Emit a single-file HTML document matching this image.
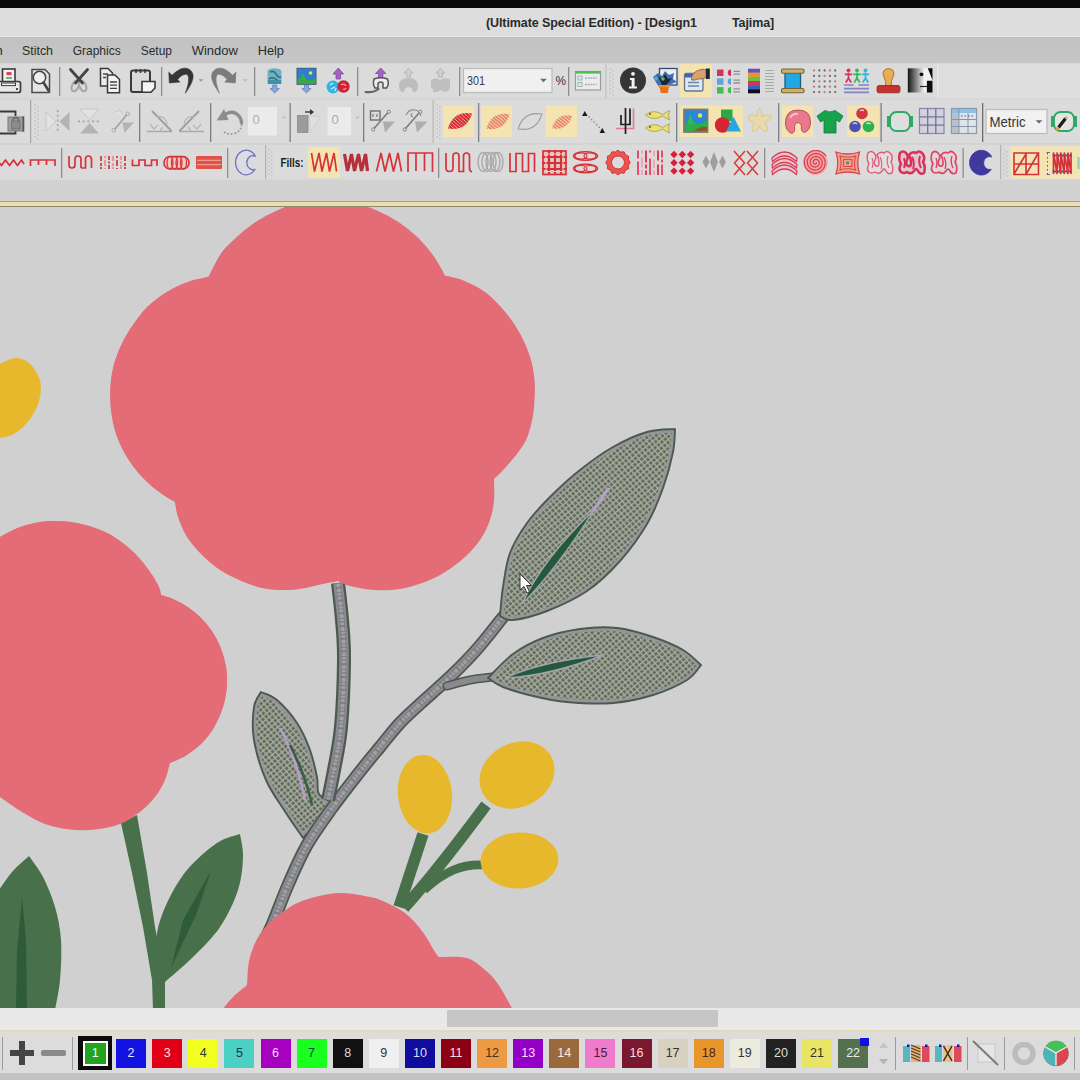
<!DOCTYPE html><html><head><meta charset="utf-8"><title>Design1</title><style>
html,body{margin:0;padding:0;}
body{width:1080px;height:1080px;overflow:hidden;background:#d1d1d1;position:relative;font-family:"Liberation Sans",sans-serif;color:#222;}
.a{position:absolute;}
#blk{left:0;top:0;width:1080px;height:8px;background:#0a0a0a;}
#title{left:0;top:8px;width:1080px;height:28px;background:#dddddd;}
#title span{position:absolute;top:7.5px;font-size:12.5px;font-weight:bold;color:#2a2a2a;white-space:nowrap;letter-spacing:-0.1px}
#menu{left:0;top:36px;width:1080px;height:27px;background:linear-gradient(#c1c1c1,#c7c7c7);border-top:1px solid #e6e6e6;box-sizing:border-box}
#menu span{position:absolute;top:6px;font-size:13px;color:#2b2b2b;white-space:nowrap}
.tb{background:#dadada;border-right:1px solid #bdbdbd;box-sizing:border-box}
.sep{width:1px;background:#8c8c8c;}
.hl{background:#f3e4b3;}
.grip{width:5px;background:repeating-linear-gradient(180deg,#c4c4c4 0 1px,#e6e6e6 1px 3px);opacity:.9}
#rows{left:0;top:63px;width:1080px;height:117px;background:#d4d4d4;}
#band{left:0;top:180px;width:1080px;height:21px;background:#d2d2d2;}
#yline{left:0;top:200.7px;width:1080px;height:6.3px;background:#e8dfb0;border-top:1px solid #a8a283;border-bottom:1.4px solid #8f8a6e;box-sizing:border-box}
#canvas{left:0;top:207px;width:1080px;height:801px;background:#d0d0d0;overflow:hidden}
#scroll{left:0;top:1008px;width:1080px;height:22px;background:#e8e8e8;}
#thumb{left:447px;top:1010px;width:271px;height:17px;background:#c6c6c6;}
#yline2{left:0;top:1029.5px;width:1080px;height:2.5px;background:#e2dab2;}
#pal{left:0;top:1032px;width:1080px;height:41px;background:#dcdcdc;}
#bot{left:0;top:1073px;width:1080px;height:7px;background:#c2c2c2;}
.sw{position:absolute;top:1039px;width:30px;height:29px;font-size:12.5px;line-height:29px;text-align:center;}
.cb{background:#f1f1f1;border:1px solid #bcbcbc;box-sizing:border-box;font-size:14px;color:#333}
svg{position:absolute;overflow:visible}
</style></head><body>
<div id="blk" class="a"></div>
<div id="title" class="a"><span style="left:486px">(Ultimate Special Edition) - [Design1</span><span style="left:732px">Tajima]</span></div>
<div id="menu" class="a"><svg style="left:0;top:0" width="1080" height="27" font-size="13" fill="#2b2b2b"><text x="-4.500" y="17.600">n</text><text x="22" y="17.600" textLength="31" lengthAdjust="spacingAndGlyphs">Stitch</text><text x="72.700" y="17.600" textLength="48" lengthAdjust="spacingAndGlyphs">Graphics</text><text x="140.700" y="17.600" textLength="31.300" lengthAdjust="spacingAndGlyphs">Setup</text><text x="191.700" y="17.600" textLength="46.300" lengthAdjust="spacingAndGlyphs">Window</text><text x="257.700" y="17.600" textLength="26.300" lengthAdjust="spacingAndGlyphs">Help</text></svg></div>
<div id="rows" class="a"></div>
<div id="band" class="a"></div>
<div id="yline" class="a"></div>
<div id="canvas" class="a"><svg id="art" style="left:0;top:0" width="1080" height="801" viewBox="0 207 1080 801">
<defs><pattern id="hx" width="4.4" height="4.4" patternUnits="userSpaceOnUse" patternTransform="rotate(-40)">
<rect width="4.4" height="4.4" fill="#626c5d"/><path d="M0,0.7H4.4M0.7,0V4.4" stroke="#a9ad9f" stroke-width="1.35"/></pattern></defs>
<clipPath id="cl3"><path d="M261.0,692.0 C259.8,694.5 255.2,699.0 254.0,707.0 C252.8,715.0 252.0,727.8 254.0,740.0 C256.0,752.2 260.7,767.8 266.0,780.0 C271.3,792.2 279.8,803.3 286.0,813.0 C292.2,822.7 300.2,833.8 303.0,838.0 C305.5,835.3 313.2,828.0 318.0,822.0 C322.8,816.0 329.7,805.3 332.0,802.0 C329.8,800.7 321.5,798.2 319.0,794.0 C316.5,789.8 318.5,784.3 317.0,777.0 C315.5,769.7 313.3,759.0 310.0,750.0 C306.7,741.0 302.5,731.3 297.0,723.0 C291.5,714.7 283.0,705.2 277.0,700.0 C271.0,694.8 263.7,693.3 261.0,692.0 Z"/></clipPath><path d="M261.0,692.0 C259.8,694.5 255.2,699.0 254.0,707.0 C252.8,715.0 252.0,727.8 254.0,740.0 C256.0,752.2 260.7,767.8 266.0,780.0 C271.3,792.2 279.8,803.3 286.0,813.0 C292.2,822.7 300.2,833.8 303.0,838.0 C305.5,835.3 313.2,828.0 318.0,822.0 C322.8,816.0 329.7,805.3 332.0,802.0 C329.8,800.7 321.5,798.2 319.0,794.0 C316.5,789.8 318.5,784.3 317.0,777.0 C315.5,769.7 313.3,759.0 310.0,750.0 C306.7,741.0 302.5,731.3 297.0,723.0 C291.5,714.7 283.0,705.2 277.0,700.0 C271.0,694.8 263.7,693.3 261.0,692.0 Z" fill="url(#hx)" stroke="#96959c" stroke-width="7" stroke-linejoin="round" clip-path="url(#cl3)"/>
<path d="M261.0,692.0 C259.8,694.5 255.2,699.0 254.0,707.0 C252.8,715.0 252.0,727.8 254.0,740.0 C256.0,752.2 260.7,767.8 266.0,780.0 C271.3,792.2 279.8,803.3 286.0,813.0 C292.2,822.7 300.2,833.8 303.0,838.0 C305.5,835.3 313.2,828.0 318.0,822.0 C322.8,816.0 329.7,805.3 332.0,802.0 C329.8,800.7 321.5,798.2 319.0,794.0 C316.5,789.8 318.5,784.3 317.0,777.0 C315.5,769.7 313.3,759.0 310.0,750.0 C306.7,741.0 302.5,731.3 297.0,723.0 C291.5,714.7 283.0,705.2 277.0,700.0 C271.0,694.8 263.7,693.3 261.0,692.0 Z" fill="none" stroke="#4a5a4c" stroke-width="1.9" stroke-linejoin="round"/>
<path d="M280,728 C292,750 300,775 305,800" fill="none" stroke="#b5a0c8" stroke-width="2.5"/>
<path d="M290,745 C300,765 308,785 312,805" fill="none" stroke="#3a5c44" stroke-width="2.5"/>
<path d="M503.0,617.0 C498.8,622.2 486.5,638.3 478.0,648.0 C469.5,657.7 461.7,665.7 452.0,675.0 C442.3,684.3 428.7,696.0 420.0,704.0 C411.3,712.0 406.7,715.8 400.0,723.0 C393.3,730.2 387.0,738.5 380.0,747.0 C373.0,755.5 366.0,763.8 358.0,774.0 C350.0,784.2 340.5,796.2 332.0,808.0 C323.5,819.8 314.3,832.2 307.0,845.0 C299.7,857.8 293.8,871.7 288.0,885.0 C282.2,898.3 276.3,915.0 272.0,925.0 C267.7,935.0 263.7,941.7 262.0,945.0" fill="none" stroke="#4a5a4c" stroke-width="13" stroke-linecap="round"/>
<path d="M503.0,617.0 C498.8,622.2 486.5,638.3 478.0,648.0 C469.5,657.7 461.7,665.7 452.0,675.0 C442.3,684.3 428.7,696.0 420.0,704.0 C411.3,712.0 406.7,715.8 400.0,723.0 C393.3,730.2 387.0,738.5 380.0,747.0 C373.0,755.5 366.0,763.8 358.0,774.0 C350.0,784.2 340.5,796.2 332.0,808.0 C323.5,819.8 314.3,832.2 307.0,845.0 C299.7,857.8 293.8,871.7 288.0,885.0 C282.2,898.3 276.3,915.0 272.0,925.0 C267.7,935.0 263.7,941.7 262.0,945.0" fill="none" stroke="#8b8890" stroke-width="9.5" stroke-linecap="round"/>
<path d="M503.0,617.0 C498.8,622.2 486.5,638.3 478.0,648.0 C469.5,657.7 461.7,665.7 452.0,675.0 C442.3,684.3 428.7,696.0 420.0,704.0 C411.3,712.0 406.7,715.8 400.0,723.0 C393.3,730.2 387.0,738.5 380.0,747.0 C373.0,755.5 366.0,763.8 358.0,774.0 C350.0,784.2 340.5,796.2 332.0,808.0 C323.5,819.8 314.3,832.2 307.0,845.0 C299.7,857.8 293.8,871.7 288.0,885.0 C282.2,898.3 276.3,915.0 272.0,925.0 C267.7,935.0 263.7,941.7 262.0,945.0" fill="none" stroke="#a3a1a8" stroke-width="3.3"/>
<path d="M503.0,617.0 C498.8,622.2 486.5,638.3 478.0,648.0 C469.5,657.7 461.7,665.7 452.0,675.0 C442.3,684.3 428.7,696.0 420.0,704.0 C411.3,712.0 406.7,715.8 400.0,723.0 C393.3,730.2 387.0,738.5 380.0,747.0 C373.0,755.5 366.0,763.8 358.0,774.0 C350.0,784.2 340.5,796.2 332.0,808.0 C323.5,819.8 314.3,832.2 307.0,845.0 C299.7,857.8 293.8,871.7 288.0,885.0 C282.2,898.3 276.3,915.0 272.0,925.0 C267.7,935.0 263.7,941.7 262.0,945.0" fill="none" stroke="#5e6062" stroke-width="5.2" stroke-dasharray="1.200 2.600 2 3.800 1 2.200" opacity=".5"/>
<path d="M447.0,686.0 C450.8,685.0 462.5,681.5 470.0,680.0 C477.5,678.5 488.3,677.5 492.0,677.0" fill="none" stroke="#4a5a4c" stroke-width="9" stroke-linecap="round"/>
<path d="M447.0,686.0 C450.8,685.0 462.5,681.5 470.0,680.0 C477.5,678.5 488.3,677.5 492.0,677.0" fill="none" stroke="#8b8890" stroke-width="6" stroke-linecap="round"/>
<path d="M338.0,583.0 C338.7,589.2 341.0,607.2 342.0,620.0 C343.0,632.8 344.2,642.2 344.0,660.0 C343.8,677.8 342.7,708.7 341.0,727.0 C339.3,745.3 336.2,757.8 334.0,770.0 C331.8,782.2 329.0,795.0 328.0,800.0" fill="none" stroke="#4a5a4c" stroke-width="14" stroke-linecap="butt"/>
<path d="M338.0,583.0 C338.7,589.2 341.0,607.2 342.0,620.0 C343.0,632.8 344.2,642.2 344.0,660.0 C343.8,677.8 342.7,708.7 341.0,727.0 C339.3,745.3 336.2,757.8 334.0,770.0 C331.8,782.2 329.0,795.0 328.0,800.0" fill="none" stroke="#8b8890" stroke-width="9.5" stroke-linecap="butt"/>
<path d="M338.0,583.0 C338.7,589.2 341.0,607.2 342.0,620.0 C343.0,632.8 344.2,642.2 344.0,660.0 C343.8,677.8 342.7,708.7 341.0,727.0 C339.3,745.3 336.2,757.8 334.0,770.0 C331.8,782.2 329.0,795.0 328.0,800.0" fill="none" stroke="#a3a1a8" stroke-width="3.3"/>
<path d="M338.0,583.0 C338.7,589.2 341.0,607.2 342.0,620.0 C343.0,632.8 344.2,642.2 344.0,660.0 C343.8,677.8 342.7,708.7 341.0,727.0 C339.3,745.3 336.2,757.8 334.0,770.0 C331.8,782.2 329.0,795.0 328.0,800.0" fill="none" stroke="#5e6062" stroke-width="5.2" stroke-dasharray="1.200 2.600 2 3.800 1 2.200" opacity=".5"/>
<clipPath id="cl1"><path d="M675.0,429.0 C670.3,429.5 657.3,429.0 647.0,432.0 C636.7,435.0 624.2,440.7 613.0,447.0 C601.8,453.3 590.5,461.7 580.0,470.0 C569.5,478.3 558.8,488.2 550.0,497.0 C541.2,505.8 533.7,513.7 527.0,523.0 C520.3,532.3 514.0,542.3 510.0,553.0 C506.0,563.7 504.7,576.5 503.0,587.0 C501.3,597.5 500.5,611.2 500.0,616.0 C502.2,616.7 505.2,620.8 513.0,620.0 C520.8,619.2 534.7,615.8 547.0,611.0 C559.3,606.2 574.8,599.3 587.0,591.0 C599.2,582.7 610.0,572.2 620.0,561.0 C630.0,549.8 639.8,536.2 647.0,524.0 C654.2,511.8 658.7,500.0 663.0,488.0 C667.3,476.0 671.0,461.8 673.0,452.0 C675.0,442.2 674.7,432.8 675.0,429.0 Z"/></clipPath><path d="M675.0,429.0 C670.3,429.5 657.3,429.0 647.0,432.0 C636.7,435.0 624.2,440.7 613.0,447.0 C601.8,453.3 590.5,461.7 580.0,470.0 C569.5,478.3 558.8,488.2 550.0,497.0 C541.2,505.8 533.7,513.7 527.0,523.0 C520.3,532.3 514.0,542.3 510.0,553.0 C506.0,563.7 504.7,576.5 503.0,587.0 C501.3,597.5 500.5,611.2 500.0,616.0 C502.2,616.7 505.2,620.8 513.0,620.0 C520.8,619.2 534.7,615.8 547.0,611.0 C559.3,606.2 574.8,599.3 587.0,591.0 C599.2,582.7 610.0,572.2 620.0,561.0 C630.0,549.8 639.8,536.2 647.0,524.0 C654.2,511.8 658.7,500.0 663.0,488.0 C667.3,476.0 671.0,461.8 673.0,452.0 C675.0,442.2 674.7,432.8 675.0,429.0 Z" fill="url(#hx)" stroke="#96959c" stroke-width="7" stroke-linejoin="round" clip-path="url(#cl1)"/>
<path d="M675.0,429.0 C670.3,429.5 657.3,429.0 647.0,432.0 C636.7,435.0 624.2,440.7 613.0,447.0 C601.8,453.3 590.5,461.7 580.0,470.0 C569.5,478.3 558.8,488.2 550.0,497.0 C541.2,505.8 533.7,513.7 527.0,523.0 C520.3,532.3 514.0,542.3 510.0,553.0 C506.0,563.7 504.7,576.5 503.0,587.0 C501.3,597.5 500.5,611.2 500.0,616.0 C502.2,616.7 505.2,620.8 513.0,620.0 C520.8,619.2 534.7,615.8 547.0,611.0 C559.3,606.2 574.8,599.3 587.0,591.0 C599.2,582.7 610.0,572.2 620.0,561.0 C630.0,549.8 639.8,536.2 647.0,524.0 C654.2,511.8 658.7,500.0 663.0,488.0 C667.3,476.0 671.0,461.8 673.0,452.0 C675.0,442.2 674.7,432.8 675.0,429.0 Z" fill="none" stroke="#4a5a4c" stroke-width="1.9" stroke-linejoin="round"/>
<clipPath id="cl2"><path d="M488.0,678.0 C492.2,674.0 503.8,660.7 513.0,654.0 C522.2,647.3 531.8,642.2 543.0,638.0 C554.2,633.8 567.7,630.7 580.0,629.0 C592.3,627.3 604.8,626.7 617.0,628.0 C629.2,629.3 642.0,633.3 653.0,637.0 C664.0,640.7 675.0,645.3 683.0,650.0 C691.0,654.7 698.0,662.5 701.0,665.0 C698.7,667.5 695.0,675.0 687.0,680.0 C679.0,685.0 665.3,691.2 653.0,695.0 C640.7,698.8 627.3,701.8 613.0,703.0 C598.7,704.2 580.3,703.2 567.0,702.0 C553.7,700.8 543.7,698.5 533.0,696.0 C522.3,693.5 510.5,690.0 503.0,687.0 C495.5,684.0 490.5,679.5 488.0,678.0 Z"/></clipPath><path d="M488.0,678.0 C492.2,674.0 503.8,660.7 513.0,654.0 C522.2,647.3 531.8,642.2 543.0,638.0 C554.2,633.8 567.7,630.7 580.0,629.0 C592.3,627.3 604.8,626.7 617.0,628.0 C629.2,629.3 642.0,633.3 653.0,637.0 C664.0,640.7 675.0,645.3 683.0,650.0 C691.0,654.7 698.0,662.5 701.0,665.0 C698.7,667.5 695.0,675.0 687.0,680.0 C679.0,685.0 665.3,691.2 653.0,695.0 C640.7,698.8 627.3,701.8 613.0,703.0 C598.7,704.2 580.3,703.2 567.0,702.0 C553.7,700.8 543.7,698.5 533.0,696.0 C522.3,693.5 510.5,690.0 503.0,687.0 C495.5,684.0 490.5,679.5 488.0,678.0 Z" fill="url(#hx)" stroke="#96959c" stroke-width="7" stroke-linejoin="round" clip-path="url(#cl2)"/>
<path d="M488.0,678.0 C492.2,674.0 503.8,660.7 513.0,654.0 C522.2,647.3 531.8,642.2 543.0,638.0 C554.2,633.8 567.7,630.7 580.0,629.0 C592.3,627.3 604.8,626.7 617.0,628.0 C629.2,629.3 642.0,633.3 653.0,637.0 C664.0,640.7 675.0,645.3 683.0,650.0 C691.0,654.7 698.0,662.5 701.0,665.0 C698.7,667.5 695.0,675.0 687.0,680.0 C679.0,685.0 665.3,691.2 653.0,695.0 C640.7,698.8 627.3,701.8 613.0,703.0 C598.7,704.2 580.3,703.2 567.0,702.0 C553.7,700.8 543.7,698.5 533.0,696.0 C522.3,693.5 510.5,690.0 503.0,687.0 C495.5,684.0 490.5,679.5 488.0,678.0 Z" fill="none" stroke="#4a5a4c" stroke-width="1.9" stroke-linejoin="round"/>
<path d="M522,604 Q543,558.500 594,510 Q557,568.500 522,604 Z" fill="#245a3c" stroke="#a5a3ae" stroke-width="1.4"/>
<path d="M594,510 L608,489" stroke="#b5a0c8" stroke-width="3.2" stroke-linecap="round"/>
<path d="M505,678 Q542.5,661 604,655 Q546.500,676.500 505,678 Z" fill="#245a3c" stroke="#a5a3ae" stroke-width="1.4"/>
<path d="M423,834 L399,907" fill="none" stroke="#48704a" stroke-width="11.500" stroke-linecap="butt"/>
<path d="M486,805 C466,832 436,872 404,908" fill="none" stroke="#48704a" stroke-width="11.500" stroke-linecap="butt"/>
<path d="M483,865 C462,864 445,871 424,890" fill="none" stroke="#48704a" stroke-width="8.600" stroke-linecap="butt"/>
<ellipse cx="425" cy="794.200" rx="27" ry="39.500" transform="rotate(-6 425 795)" fill="#e8b82c"/>
<ellipse cx="517" cy="775" rx="39" ry="32" transform="rotate(-28 517 775)" fill="#e8b82c"/>
<ellipse cx="519.500" cy="860.400" rx="39" ry="28" transform="rotate(-3 520 860)" fill="#e8b82c"/>
<path d="M-3.0,362.0 C-2.5,362.3 -1.7,364.2 0.0,364.0 C1.7,363.8 4.2,361.5 7.0,360.5 C9.8,359.5 13.5,357.8 17.0,358.0 C20.5,358.2 24.9,359.8 28.0,362.0 C31.1,364.2 33.4,367.5 35.5,371.0 C37.6,374.5 39.8,378.7 40.5,383.0 C41.2,387.3 41.0,392.2 40.0,397.0 C39.0,401.8 37.1,407.2 34.5,412.0 C31.9,416.8 28.1,421.8 24.5,425.5 C20.9,429.2 17.1,432.4 13.0,434.5 C8.9,436.6 2.7,437.4 0.0,438.0 C-2.7,438.6 -2.5,438.0 -3.0,438.0 C-3.0,425.3 -3.0,374.7 -3.0,362.0 Z" fill="#e8b82c"/>
<path d="M121,823 L137,815 L147,873 L155,927 L165,980 L165,1010 L153,1010 L152,980 L143,927 L132,873 Z" fill="#48704a"/>
<path d="M-3.0,893.0 C-0.5,889.5 6.7,878.2 12.0,872.0 C17.3,865.8 26.2,858.7 29.0,856.0 C31.3,859.5 38.7,868.5 43.0,877.0 C47.3,885.5 52.0,896.5 55.0,907.0 C58.0,917.5 60.2,927.8 61.0,940.0 C61.8,952.2 61.0,968.3 60.0,980.0 C59.0,991.7 55.8,1005.0 55.0,1010.0 C45.3,1010.0 6.7,1010.0 -3.0,1010.0 C-3.0,990.5 -3.0,912.5 -3.0,893.0 Z" fill="#48704a"/>
<path d="M240.0,834.0 C236.2,835.5 225.8,837.0 217.0,843.0 C208.2,849.0 195.3,860.0 187.0,870.0 C178.7,880.0 172.0,892.5 167.0,903.0 C162.0,913.5 158.5,923.5 157.0,933.0 C155.5,942.5 156.7,951.8 158.0,960.0 C159.3,968.2 163.8,978.3 165.0,982.0 C169.7,977.8 183.8,966.2 193.0,957.0 C202.2,947.8 212.5,938.2 220.0,927.0 C227.5,915.8 234.2,901.7 238.0,890.0 C241.8,878.3 242.7,866.3 243.0,857.0 C243.3,847.7 240.5,837.8 240.0,834.0 Z" fill="#48704a"/>
<path d="M22,898 L26,940 L27,1010 L16,1010 L17,950 Z" fill="#2f5c38"/>
<path d="M211,871 L196,915 L171,968 L183,920 Z" fill="#2f5c38"/>
<path d="M285.0,207.0 C298.3,207.0 351.7,207.0 365.0,207.0 C369.2,209.2 382.2,215.3 390.0,220.0 C397.8,224.7 405.3,229.7 412.0,235.0 C418.7,240.3 425.3,246.7 430.0,252.0 C434.7,257.3 437.5,263.0 440.0,267.0 C442.5,271.0 444.2,274.5 445.0,276.0 C447.8,276.7 455.3,277.3 462.0,280.0 C468.7,282.7 477.8,286.7 485.0,292.0 C492.2,297.3 499.2,304.8 505.0,312.0 C510.8,319.2 515.8,327.5 520.0,335.0 C524.2,342.5 527.6,349.5 530.0,357.0 C532.4,364.5 533.8,371.7 534.5,380.0 C535.2,388.3 534.6,399.5 534.0,407.0 C533.4,414.5 532.5,419.2 531.0,425.0 C529.5,430.8 528.2,436.2 525.0,442.0 C521.8,447.8 516.2,455.0 512.0,460.0 C507.8,465.0 503.0,469.0 500.0,472.0 C497.0,475.0 495.0,477.0 494.0,478.0 C494.0,481.7 494.7,493.0 494.0,500.0 C493.3,507.0 492.3,513.3 490.0,520.0 C487.7,526.7 484.2,533.8 480.0,540.0 C475.8,546.2 470.8,551.7 465.0,557.0 C459.2,562.3 451.7,567.8 445.0,572.0 C438.3,576.2 432.5,579.2 425.0,582.0 C417.5,584.8 408.3,587.7 400.0,589.0 C391.7,590.3 383.3,590.5 375.0,590.0 C366.7,589.5 356.2,587.5 350.0,586.0 C343.8,584.5 340.0,581.8 338.0,581.0 C333.7,581.8 320.5,584.5 312.0,586.0 C303.5,587.5 295.3,589.7 287.0,590.0 C278.7,590.3 269.8,589.7 262.0,588.0 C254.2,586.3 247.0,583.0 240.0,580.0 C233.0,577.0 226.3,574.2 220.0,570.0 C213.7,565.8 207.5,560.5 202.0,555.0 C196.5,549.5 191.0,543.3 187.0,537.0 C183.0,530.7 180.0,522.8 178.0,517.0 C176.0,511.2 175.5,504.5 175.0,502.0 C173.3,501.0 169.7,499.3 165.0,496.0 C160.3,492.7 152.8,487.7 147.0,482.0 C141.2,476.3 135.0,469.5 130.0,462.0 C125.0,454.5 120.2,445.7 117.0,437.0 C113.8,428.3 112.0,419.5 111.0,410.0 C110.0,400.5 110.0,389.2 111.0,380.0 C112.0,370.8 113.8,363.3 117.0,355.0 C120.2,346.7 125.0,338.0 130.0,330.0 C135.0,322.0 140.3,313.7 147.0,307.0 C153.7,300.3 162.5,294.4 170.0,290.0 C177.5,285.6 185.7,282.5 192.0,280.5 C198.3,278.5 205.3,278.4 208.0,278.0 C210.3,273.7 216.7,259.2 222.0,252.0 C227.3,244.8 233.7,240.3 240.0,235.0 C246.3,229.7 252.5,224.7 260.0,220.0 C267.5,215.3 280.8,209.2 285.0,207.0 Z" fill="#e46c77"/>
<path d="M-5.0,540.0 C-4.2,539.5 -4.2,539.2 0.0,537.0 C4.2,534.8 13.3,529.5 20.0,527.0 C26.7,524.5 33.8,523.0 40.0,522.0 C46.2,521.0 50.3,520.7 57.0,521.0 C63.7,521.3 72.8,522.5 80.0,524.0 C87.2,525.5 94.2,527.8 100.0,530.0 C105.8,532.2 109.7,533.8 115.0,537.5 C120.3,541.2 126.2,546.2 132.0,552.0 C137.8,557.8 145.5,566.2 150.0,572.0 C154.5,577.8 157.2,583.2 159.0,587.0 C160.8,590.8 160.7,593.7 161.0,595.0 C163.3,595.8 169.3,597.1 175.0,600.0 C180.7,602.9 188.8,607.2 195.0,612.5 C201.2,617.8 207.5,625.4 212.0,632.0 C216.5,638.6 219.5,644.8 222.0,652.0 C224.5,659.2 226.5,667.0 227.0,675.0 C227.5,683.0 226.7,692.2 225.0,700.0 C223.3,707.8 220.3,715.3 217.0,722.0 C213.7,728.7 210.0,734.5 205.0,740.0 C200.0,745.5 192.8,751.2 187.0,755.0 C181.2,758.8 172.8,761.7 170.0,763.0 C169.2,765.8 167.5,774.3 165.0,780.0 C162.5,785.7 159.2,791.7 155.0,797.0 C150.8,802.3 145.8,807.5 140.0,812.0 C134.2,816.5 127.5,821.1 120.0,824.0 C112.5,826.9 103.3,828.6 95.0,829.5 C86.7,830.4 78.3,830.4 70.0,829.5 C61.7,828.6 53.0,826.9 45.0,824.0 C37.0,821.1 29.5,816.5 22.0,812.0 C14.5,807.5 4.5,800.2 0.0,797.0 C-4.5,793.8 -4.2,793.7 -5.0,793.0 C-5.0,750.8 -5.0,582.2 -5.0,540.0 Z" fill="#e46c77"/>
<path d="M222.0,1010.0 C223.8,1007.8 228.8,1001.2 233.0,997.0 C237.2,992.8 244.7,987.0 247.0,985.0 C247.5,980.3 247.3,966.2 250.0,957.0 C252.7,947.8 256.3,938.3 263.0,930.0 C269.7,921.7 281.3,912.5 290.0,907.0 C298.7,901.5 306.5,899.3 315.0,897.0 C323.5,894.7 331.8,893.0 341.0,893.0 C350.2,893.0 362.7,895.5 370.0,897.0 C377.3,898.5 379.2,899.3 385.0,902.0 C390.8,904.7 398.8,908.2 405.0,913.0 C411.2,917.8 417.0,924.5 422.0,931.0 C427.0,937.5 432.2,947.7 435.0,952.0 C437.8,956.3 438.3,956.2 439.0,957.0 C443.7,957.2 459.3,955.8 467.0,958.0 C474.7,960.2 479.8,965.7 485.0,970.0 C490.2,974.3 493.3,977.3 498.0,984.0 C502.7,990.7 510.5,1005.7 513.0,1010.0 C464.5,1010.0 270.5,1010.0 222.0,1010.0 Z" fill="#e46c77"/>
<circle cx="327.0" cy="330.5" r="130.0" fill="#e46c77"/>
<circle cx="230.4" cy="395.0" r="120.2" fill="#e46c77"/>
<circle cx="416.5" cy="390.0" r="118.0" fill="#e46c77"/>
<circle cx="285.0" cy="477.0" r="112.8" fill="#e46c77"/>
<circle cx="57.0" cy="631.6" r="110.5" fill="#e46c77"/>
<circle cx="139.3" cy="680.0" r="87.6" fill="#e46c77"/>
<path d="M520,574 L520,590 L524,586.5 L527,593 L529.5,592 L526.5,585.5 L531.5,585.5 Z" fill="#fff" stroke="#333" stroke-width="1"/>
</svg></div>
<div id="scroll" class="a"></div><div id="thumb" class="a"></div><div id="yline2" class="a"></div><div id="pal" class="a"></div><div id="bot" class="a"></div>
<svg class="a" style="left:0;top:0" width="1080" height="1080" viewBox="0 0 1080 1080" font-family="Liberation Sans, sans-serif"><rect x="0.0" y="63.7" width="605.0" height="34.0" fill="#dbdbdb"/><rect x="607.0" y="63.7" width="330.0" height="34.0" fill="#dbdbdb"/><rect x="938.3" y="63.7" width="141.7" height="34.8" fill="#dedede"/><rect x="605" y="64" width="1.300" height="34" fill="#c6c6c6"/><rect x="937" y="64" width="1.300" height="34" fill="#e8e8e8"/><rect x="2.5" y="69" width="12.5" height="14" fill="#f2f2f2" stroke="#3a3a3a" stroke-width="1.6"/><rect x="6.5" y="72" width="5" height="3.2" fill="#e0405a"/><rect x="6" y="77" width="6" height="2" fill="#6db86a"/><rect x="-4" y="81.5" width="24.5" height="11" rx="2" fill="#e9e9e9" stroke="#3a3a3a" stroke-width="1.7"/><rect x="1.5" y="83" width="14" height="2.6" fill="#f8f8f8" stroke="#3a3a3a" stroke-width="1"/><circle cx="17" cy="89" r="1.1" fill="#222"/><path d="M32,69.5 H45 L49.5,74 V92.5 H32 Z" fill="#e4e4e4" stroke="#4a4a4a" stroke-width="1.5"/><circle cx="39.5" cy="77.5" r="6.2" fill="#efefef" stroke="#444" stroke-width="1.5"/><path d="M43.5,82.5 L48.5,90.5" stroke="#444" stroke-width="2.6" stroke-linecap="round"/><rect x="59.0" y="67" width="1.3" height="29" fill="#8e8e8e"/><ellipse cx="75.300" cy="86" rx="3.200" ry="5.600" transform="rotate(24 75.300 86)" fill="none" stroke="#a8a8a8" stroke-width="2.200"/><ellipse cx="82.700" cy="86" rx="3.200" ry="5.600" transform="rotate(-24 82.700 86)" fill="none" stroke="#a8a8a8" stroke-width="2.200"/><path d="M70.500,69.500 L82.500,83 M87.500,69.500 L75.500,83" stroke="#444" stroke-width="2.800" stroke-linecap="round"/><path d="M100.5,68.5 H108 L112.5,73 V86 H100.5 Z" fill="#ececec" stroke="#3a3a3a" stroke-width="1.5"/><path d="M107.5,75 H115 L119.5,79.5 V92.7 H107.5 Z" fill="#f2f2f2" stroke="#3a3a3a" stroke-width="1.5"/><path d="M103,74h5M103,77.5h3M110,82h7M110,85.2h7M110,88.4h7" stroke="#444" stroke-width="1.3"/><rect x="131" y="70.5" width="19" height="21.5" rx="2" fill="#d9d9d9" stroke="#3a3a3a" stroke-width="2"/><path d="M136,69 v4 M140.5,69 v4 M145,69 v4" stroke="#3a3a3a" stroke-width="1.6"/><path d="M142,81.5 H155 V88 L151,92.3 H142 Z" fill="#f4f4f4" stroke="#3a3a3a" stroke-width="1.6"/><rect x="161.0" y="67" width="1.3" height="29" fill="#8e8e8e"/><path d="M168.8,72.2 L169.3,83 L180,82 L177.6,79.8 C180.5,75.5 185,73.3 187.3,74.8 C189.8,77 188.8,84 185.3,93.2 C190.5,86 194.3,79 192.8,74 C191,68 184.5,67 180,69.3 C176,71.3 173.3,74.3 172,75.2 Z" fill="#363636" stroke="#363636" stroke-width=".6" stroke-linejoin="round"/><path d="M198.4,79.2 h5.2 l-2.6,2.6 z" fill="#9a9a9a"/><g transform="translate(404.7,0) scale(-1,1)"><path d="M168.8,72.2 L169.3,83 L180,82 L177.6,79.8 C180.5,75.5 185,73.3 187.3,74.8 C189.8,77 188.8,84 185.3,93.2 C190.5,86 194.3,79 192.8,74 C191,68 184.5,67 180,69.3 C176,71.3 173.3,74.3 172,75.2 Z" fill="#7b7b7b" stroke="#7b7b7b" stroke-width=".6" stroke-linejoin="round"/></g><path d="M242.4,79.2 h5.2 l-2.6,2.6 z" fill="#bdbdbd"/><rect x="254.0" y="67" width="1.3" height="29" fill="#8e8e8e"/><path d="M267.5,84 V72 Q267.5,68.3 274.5,68.3 Q281.5,68.3 281.5,72 V84 Z" fill="#6fb3bd"/><path d="M270,72 q4,-2 6,2 t5,3 M269,79 q4,-3 8,1" stroke="#2c6d8c" stroke-width="1.6" fill="none"/><path d="M268,80 h13 v4 h-13z" fill="#3f93a8"/><path d="M272.7,85 h4 v3.5 h2.6 l-4.6,4.5 l-4.6,-4.5 h2.6z" fill="#8aa8de" stroke="#5577b8" stroke-width=".7"/><rect x="297" y="68.3" width="19" height="16" fill="#2f7fcc" stroke="#3c5a78" stroke-width="1"/><path d="M297.5,84 v-5 q5,-3 9,0 t9,-1 v6z" fill="#35a845"/><path d="M300,80 l3,-7 l3,7z" fill="#2fb24c"/><circle cx="310.5" cy="73" r="1.8" fill="#f2e04a"/><path d="M304.5,85 h4 v3.5 h2.6 l-4.6,4.5 l-4.6,-4.5 h2.6z" fill="#8aa8de" stroke="#5577b8" stroke-width=".7"/><path d="M336,79 v-5 h-3 l5.3,-6 l5.3,6 h-3 v5z" fill="#a463c4" stroke="#7a3f9c" stroke-width=".7"/><circle cx="333" cy="87" r="6.4" fill="#2fb5e2"/><path d="M330,85 l3,-2 M331,89 l4,-2 M335,91 l1,-3" stroke="#c8f0ff" stroke-width="1.3"/><circle cx="343.5" cy="86.5" r="6.2" fill="#cf2232"/><path d="M341,85 q3,-2 5,1 M343,89 q2,1 3,-1" stroke="#f5a0a8" stroke-width="1.2" fill="none"/><rect x="357.0" y="67" width="1.3" height="29" fill="#8e8e8e"/><path d="M378.5,78 v-4.5 h-3 l5.2,-5.5 l5.2,5.5 h-3 v4.5z" fill="#a463c4" stroke="#7a3f9c" stroke-width=".7"/><path d="M374,79 q-1.5,5 1,9 h3 v-5 q3,-2 5,0 v5 h3.5 q3,-4 1,-9 q-7,-2.5 -13.500,0z" fill="#ececec" stroke="#555" stroke-width="1.5" stroke-linejoin="round"/><path d="M365.500,92 q8,1 13,-3" stroke="#666" stroke-width="2.2" fill="none" stroke-linecap="round"/><path d="M406.5,77 v-4 h-2.500 l4.5,-5 l4.5,5 h-2.500 v4z" fill="#d0d0d0" stroke="#b0b0b0" stroke-width=".8"/><path d="M399,86 q0,-8 9.500,-8 q9.500,0 9.500,8 q0,5 -4,6.500 q-2,-1 -2,-4 q-3.500,-3 -7,0 q0,3 -2,4 q-4,-1.500 -4,-6.500z" fill="#bdbdbd"/><path d="M438.5,77 v-4 h-2.500 l4.5,-5 l4.5,5 h-2.500 v4z" fill="#d0d0d0" stroke="#b0b0b0" stroke-width=".8"/><path d="M431,80 q5,-3 9,0 q4,-3 10,-1 v9 q-2,4 -6,4 q-2,-3 -5,-1 q-3,2 -6,1 q1,-3 -2,-4z" fill="#bfbfbf"/><rect x="459.0" y="67" width="1.3" height="29" fill="#8e8e8e"/><rect x="463.500" y="68.5" width="88.5" height="24" fill="#f0f0f0" stroke="#bdbdbd" stroke-width="1.3"/><text x="467" y="85" font-size="13" fill="#3a3a3a" textLength="18" lengthAdjust="spacingAndGlyphs">301</text><path d="M540.1,78.8 h6.8 l-3.4,3.4 z" fill="#6a6a6a"/><text x="555.5" y="85" font-size="13" fill="#333" textLength="10.5" lengthAdjust="spacingAndGlyphs">%</text><rect x="568.0" y="67" width="1.3" height="29" fill="#8e8e8e"/><rect x="575.500" y="71.5" width="25" height="18.5" fill="#ececec" stroke="#9a9a9a" stroke-width="1.2"/><rect x="575" y="71" width="26" height="2.600" fill="#55bb55"/><rect x="578" y="76" width="4" height="4" fill="#dfe8ee" stroke="#8aa" stroke-width=".8"/><rect x="578" y="82.5" width="4" height="4" fill="#dfe8ee" stroke="#8aa" stroke-width=".8"/><path d="M585,78 h12 M585,84.500 h12" stroke="#a8b0b8" stroke-width="1.6" stroke-dasharray="2 .7"/><rect x="609.5" y="68.0" width="1.5" height="1.5" fill="#c2c2c2"/><rect x="612.0" y="70.0" width="1.5" height="1.5" fill="#c2c2c2"/><rect x="609.5" y="72.0" width="1.5" height="1.5" fill="#c2c2c2"/><rect x="612.0" y="74.0" width="1.5" height="1.5" fill="#c2c2c2"/><rect x="609.5" y="76.0" width="1.5" height="1.5" fill="#c2c2c2"/><rect x="612.0" y="78.0" width="1.5" height="1.5" fill="#c2c2c2"/><rect x="609.5" y="80.0" width="1.5" height="1.5" fill="#c2c2c2"/><rect x="612.0" y="82.0" width="1.5" height="1.5" fill="#c2c2c2"/><rect x="609.5" y="84.0" width="1.5" height="1.5" fill="#c2c2c2"/><rect x="612.0" y="86.0" width="1.5" height="1.5" fill="#c2c2c2"/><rect x="609.5" y="88.0" width="1.5" height="1.5" fill="#c2c2c2"/><rect x="612.0" y="90.0" width="1.5" height="1.5" fill="#c2c2c2"/><rect x="609.5" y="92.0" width="1.5" height="1.5" fill="#c2c2c2"/><rect x="612.0" y="94.0" width="1.5" height="1.5" fill="#c2c2c2"/><circle cx="633" cy="80.500" r="13" fill="#363636"/><circle cx="633" cy="73.8" r="1.9" fill="#f4f4f4"/><path d="M630,78 h4.600 v8.600 h2.400 v2 h-8 v-2 h2.600 v-6.600 h-1.600z" fill="#f4f4f4"/><rect x="659.500" y="68.500" width="17.500" height="16.500" fill="#eceef6" stroke="#3e4868" stroke-width="1.3"/><path d="M653,77 l5,-4 l4,3 l3,-5 l4,4 l5,-2 l-1,6 l4,3 l-6,2 l-4,4 h-7 l-3,-4z" fill="#3f6fae"/><path d="M658,76 l4,3 l3,-5 l3,5 l4,-1 l-3,4 l-3,3 h-4z" fill="#1f2438"/><circle cx="663" cy="79" r="1.8" fill="#6fb06a"/><circle cx="656" cy="78.500" r="2" fill="#58a8c8"/><path d="M659.500,86 h9.500 l-1.200,7 h-7.100z" fill="#e2701e"/><rect x="658.500" y="85" width="11.500" height="2.200" fill="#f08a30"/><rect x="680.0" y="64.0" width="32.0" height="33.5" fill="#f3e4b2"/><rect x="684.500" y="73.500" width="18.500" height="17.500" rx="2" fill="#dbe7f3" stroke="#6a7486" stroke-width="1.3"/><rect x="685" y="74" width="17.500" height="3.500" fill="#3a66c4"/><path d="M688,82.500 h11 M688,86 h11" stroke="#6f86a8" stroke-width="1.500"/><path d="M691.500,77.500 q1,-5 6,-7 q5,-2 8.500,-1 v8 q-4,2 -8,1.500 q-3,1.500 -6.500,1 z" fill="#d9a070" stroke="#8a5a38" stroke-width=".8"/><rect x="706" y="68.500" width="3.800" height="10.500" fill="#20263a"/><rect x="717" y="69.5" width="6.500" height="6.500" fill="#d23458"/><path d="M731,69.5 a3.200,3.200 0 0 0 0,6.500z" fill="#d23458"/><path d="M733.500,71.3 h6.500 M733.500,74.2 h6.500" stroke="#8f8f9a" stroke-width="1.300"/><rect x="717" y="78.3" width="6.500" height="6.500" fill="#62a2dc"/><path d="M731,78.3 a3.200,3.200 0 0 0 0,6.500z" fill="#62a2dc"/><path d="M733.500,80.1 h6.500 M733.500,83.0 h6.500" stroke="#8f8f9a" stroke-width="1.300"/><rect x="717" y="87.1" width="6.500" height="6.500" fill="#3fc243"/><path d="M731,87.1 a3.200,3.200 0 0 0 0,6.500z" fill="#3fc243"/><path d="M733.500,88.9 h6.500 M733.500,91.8 h6.500" stroke="#8f8f9a" stroke-width="1.300"/><rect x="748" y="68.7" width="12" height="4.100" fill="#6c4fb0"/><rect x="748" y="72.8" width="12" height="4.100" fill="#f0912e"/><rect x="748" y="76.9" width="12" height="4.100" fill="#62c63c"/><rect x="748" y="81.0" width="12" height="4.100" fill="#d23458"/><rect x="748" y="85.1" width="12" height="4.100" fill="#2f62c4"/><rect x="748" y="89.2" width="12" height="4.100" fill="#101014"/><path d="M765,70.500h9 M765,73.500h9 M765,76.500h9 M765,79.500h9 M765,82.500h9 M765,85.500h9 M765,88.500h9 M765,91.500h9" stroke="#a9a9a9" stroke-width="1.200"/><rect x="785" y="72.500" width="15.500" height="16.500" fill="#1fa8e2" stroke="#1b5f7c" stroke-width="1.300"/><rect x="781.5" y="69" width="22.500" height="4.200" rx="1.500" fill="#cdb06a" stroke="#7b6230" stroke-width="1.100"/><rect x="781.5" y="88.500" width="22.500" height="4.200" rx="1.500" fill="#cdb06a" stroke="#7b6230" stroke-width="1.100"/><circle cx="814.0" cy="70.5" r="1.150" fill="#c07a7a"/><circle cx="814.0" cy="75.9" r="1.150" fill="#6f6f6f"/><circle cx="814.0" cy="81.3" r="1.150" fill="#6f6f6f"/><circle cx="814.0" cy="86.7" r="1.150" fill="#c07a7a"/><circle cx="814.0" cy="92.1" r="1.150" fill="#6f6f6f"/><circle cx="819.3" cy="70.5" r="1.150" fill="#6f6f6f"/><circle cx="819.3" cy="75.9" r="1.150" fill="#6f6f6f"/><circle cx="819.3" cy="81.3" r="1.150" fill="#c07a7a"/><circle cx="819.3" cy="86.7" r="1.150" fill="#6f6f6f"/><circle cx="819.3" cy="92.1" r="1.150" fill="#6f6f6f"/><circle cx="824.6" cy="70.5" r="1.150" fill="#6f6f6f"/><circle cx="824.6" cy="75.9" r="1.150" fill="#c07a7a"/><circle cx="824.6" cy="81.3" r="1.150" fill="#6f6f6f"/><circle cx="824.6" cy="86.7" r="1.150" fill="#6f6f6f"/><circle cx="824.6" cy="92.1" r="1.150" fill="#c07a7a"/><circle cx="829.9" cy="70.5" r="1.150" fill="#c07a7a"/><circle cx="829.9" cy="75.9" r="1.150" fill="#6f6f6f"/><circle cx="829.9" cy="81.3" r="1.150" fill="#6f6f6f"/><circle cx="829.9" cy="86.7" r="1.150" fill="#c07a7a"/><circle cx="829.9" cy="92.1" r="1.150" fill="#6f6f6f"/><circle cx="835.2" cy="70.5" r="1.150" fill="#6f6f6f"/><circle cx="835.2" cy="75.9" r="1.150" fill="#6f6f6f"/><circle cx="835.2" cy="81.3" r="1.150" fill="#c07a7a"/><circle cx="835.2" cy="86.7" r="1.150" fill="#6f6f6f"/><circle cx="835.2" cy="92.1" r="1.150" fill="#6f6f6f"/><circle cx="848.5" cy="70.300" r="1.900" fill="#d83358"/><path d="M848.5,72.500 v5.500 M844.8,74.300 h7.400 M848.5,78 l-2.700,4.500 M848.5,78 l2.700,4.500" stroke="#d83358" stroke-width="1.700" fill="none"/><circle cx="857.0" cy="70.300" r="1.900" fill="#2fba52"/><path d="M857.0,72.500 v5.500 M853.3,74.300 h7.400 M857.0,78 l-2.700,4.500 M857.0,78 l2.700,4.500" stroke="#2fba52" stroke-width="1.700" fill="none"/><circle cx="865.5" cy="70.300" r="1.900" fill="#2fb6d8"/><path d="M865.5,72.500 v5.500 M861.8,74.300 h7.400 M865.5,78 l-2.700,4.500 M865.5,78 l2.700,4.500" stroke="#2fb6d8" stroke-width="1.700" fill="none"/><path d="M844,85 h25 M844,88.700 h25 M844,92.300 h25" stroke="#8583c4" stroke-width="1.700"/><rect x="853.5" y="83.500" width="5" height="2.500" fill="#dbdbdb"/><path d="M885.5,86 q1.200,-4.500 -1.300,-8.500 q-2.500,-4.500 0,-7.200 q4.300,-3.500 8.600,0 q2.500,2.700 0,7.200 q-2.500,4 -1.300,8.500z" fill="#e8ad55" stroke="#a87428" stroke-width="1"/><rect x="877" y="85.500" width="23" height="7.300" rx="2" fill="#c5322e" stroke="#8f2320" stroke-width=".8"/><defs><linearGradient id="fg" x1="0" x2="1"><stop offset="0" stop-color="#141414"/><stop offset=".85" stop-color="#f2f2f2"/></linearGradient></defs><rect x="907.800" y="68.300" width="19.500" height="24.200" fill="url(#fg)"/><rect x="925" y="68.300" width="7.500" height="13" fill="#f2f2f2"/><path d="M927.800,68.300 h4.700 v12z M926.900,80.800 h5.600 v11.700 h-5.600z" fill="#0c0c0c"/><circle cx="921.500" cy="74.300" r="1.900" fill="#111"/><path d="M920,86.500 h7" stroke="#222" stroke-width="1.200"/><rect x="0.0" y="99.6" width="30.0" height="43.4" fill="#dbdbdb"/><rect x="31.5" y="99.6" width="401.0" height="43.4" fill="#dbdbdb"/><rect x="434.0" y="99.6" width="646.0" height="43.4" fill="#dbdbdb"/><rect x="30" y="100" width="1.200" height="43" fill="#a8a8a8"/><rect x="432.6" y="100" width="1.200" height="43" fill="#b8b8b8"/><path d="M-3,111.500 H15.500 V116 M-3,133.500 H15.500 V131" fill="none" stroke="#3a3a3a" stroke-width="1.800"/><rect x="8" y="117" width="15.500" height="14" fill="#a0a0a0" stroke="#777" stroke-width="1"/><rect x="11.500" y="121" width="8.500" height="8" fill="#8c8c8c" stroke="#6a6a6a" stroke-width=".8"/><path d="M13,121 v-2 q2.800,-2.500 5.500,0 v2" fill="none" stroke="#666" stroke-width="1.300"/><rect x="22.500" y="116.500" width="1.800" height="15" fill="#555"/><rect x="34.5" y="104.0" width="1.5" height="1.5" fill="#c2c2c2"/><rect x="37.0" y="106.0" width="1.5" height="1.5" fill="#c2c2c2"/><rect x="34.5" y="108.0" width="1.5" height="1.5" fill="#c2c2c2"/><rect x="37.0" y="110.0" width="1.5" height="1.5" fill="#c2c2c2"/><rect x="34.5" y="112.0" width="1.5" height="1.5" fill="#c2c2c2"/><rect x="37.0" y="114.0" width="1.5" height="1.5" fill="#c2c2c2"/><rect x="34.5" y="116.0" width="1.5" height="1.5" fill="#c2c2c2"/><rect x="37.0" y="118.0" width="1.5" height="1.5" fill="#c2c2c2"/><rect x="34.5" y="120.0" width="1.5" height="1.5" fill="#c2c2c2"/><rect x="37.0" y="122.0" width="1.5" height="1.5" fill="#c2c2c2"/><rect x="34.5" y="124.0" width="1.5" height="1.5" fill="#c2c2c2"/><rect x="37.0" y="126.0" width="1.5" height="1.5" fill="#c2c2c2"/><rect x="34.5" y="128.0" width="1.5" height="1.5" fill="#c2c2c2"/><rect x="37.0" y="130.0" width="1.5" height="1.5" fill="#c2c2c2"/><rect x="34.5" y="132.0" width="1.5" height="1.5" fill="#c2c2c2"/><rect x="37.0" y="134.0" width="1.5" height="1.5" fill="#c2c2c2"/><rect x="34.5" y="136.0" width="1.5" height="1.5" fill="#c2c2c2"/><rect x="37.0" y="138.0" width="1.5" height="1.5" fill="#c2c2c2"/><path d="M46,112 V131 L56,121.500z" fill="#e2e2e2" stroke="#c6c6c6" stroke-width="1"/><path d="M69.500,112 V131 L59.500,121.500z" fill="#b4b4b4"/><path d="M57.700,110 V133" stroke="#a6a6a6" stroke-width="1.700" stroke-dasharray="2 2.700"/><path d="M80,109 H99 L89.500,119.500z" fill="#e2e2e2" stroke="#c6c6c6" stroke-width="1"/><path d="M80,133.500 H99 L89.500,123z" fill="#b4b4b4"/><path d="M78,121.300 H101" stroke="#a6a6a6" stroke-width="1.700" stroke-dasharray="2 2.700"/><path d="M113,113 l7,-3 l3,6" fill="#e2e2e2" stroke="#cacaca" stroke-width="1"/><path d="M122.500,122.500 H134 L124.500,133z" fill="#b4b4b4"/><path d="M114.500,129.500 L127,114.500" stroke="#a2a2a2" stroke-width="1.700"/><circle cx="113.700" cy="130.300" r="1.700" fill="#e8e8e8" stroke="#a2a2a2"/><circle cx="127.800" cy="113.700" r="1.700" fill="#e8e8e8" stroke="#a2a2a2"/><rect x="139.0" y="103" width="1.3" height="39" fill="#7e7e7e"/><path d="M147,131.500 H172" stroke="#a8a8a8" stroke-width="1.500"/><path d="M152,111 L171.500,131" stroke="#a0a0a0" stroke-width="2"/><path d="M157,117 q8,-2 10,7 M150,124 l4,5 l4,-4 M163,127 l-3,4" fill="none" stroke="#b6b6b6" stroke-width="1.300"/><path d="M179,131.500 H204" stroke="#a8a8a8" stroke-width="1.500"/><path d="M199,111 L179.500,131" stroke="#a0a0a0" stroke-width="2"/><path d="M194,117 q-8,-2 -10,7 M201,124 l-4,5 l-4,-4 M188,127 l3,4" fill="none" stroke="#b6b6b6" stroke-width="1.300"/><rect x="210.0" y="103" width="1.3" height="39" fill="#7e7e7e"/><path d="M216.500,120.500 L224,109 L228.500,120z" fill="#8d8d8d"/><path d="M224,115 q9,-6 15,1 q3,4 2.500,8" fill="none" stroke="#8d8d8d" stroke-width="3.200"/><path d="M241.500,124 q0,7 -7,9.500 q-7,2 -12,-3" fill="none" stroke="#9a9a9a" stroke-width="1.800" stroke-dasharray="1.800 1.800"/><rect x="248" y="107" width="29" height="28.500" fill="#ebebeb"/><text x="252.5" y="123.500" font-size="13" fill="#adadad">0</text><path d="M281.7,116.8 h4.6 l-2.3,2.3 z" fill="#bdbdbd"/><rect x="289.5" y="103" width="1.3" height="39" fill="#7e7e7e"/><path d="M309,116.500 H320.500 L311,131z" fill="#e0e0e0" stroke="#cecece" stroke-width=".8"/><rect x="297.500" y="115.500" width="10.500" height="17" fill="#9c9c9c" stroke="#8a8a8a" stroke-width=".8"/><path d="M305,112 h6" stroke="#444" stroke-width="1.500"/><path d="M310,109 l4,3 l-4,3z" fill="#333"/><rect x="327.500" y="107" width="23.500" height="28.500" fill="#ebebeb"/><text x="331.500" y="123.500" font-size="13" fill="#adadad">0</text><path d="M355.2,116.8 h4.6 l-2.3,2.3 z" fill="#bdbdbd"/><rect x="363.0" y="103" width="1.3" height="39" fill="#7e7e7e"/><rect x="370.500" y="111" width="9.500" height="9" fill="#dcdcdc" stroke="#6e6e6e" stroke-width="1.400"/><path d="M373,114 v3 M377,114 v3" stroke="#777" stroke-width="1.200"/><path d="M383,121.500 H395 L385,132.500z" fill="#adadad"/><path d="M374,128.500 L388,112.500" stroke="#7c7c7c" stroke-width="1.600"/><circle cx="373.300" cy="129.500" r="1.600" fill="#e8e8e8" stroke="#7c7c7c"/><circle cx="388.800" cy="111.800" r="1.600" fill="#e8e8e8" stroke="#7c7c7c"/><path d="M406,115 q3,-6 9,-5 q5,1 6,6 M412,113 q-2,3 1,4" fill="none" stroke="#909090" stroke-width="1.200"/><path d="M415,121.500 H427.500 L417,132.500z" fill="#adadad"/><path d="M405.500,128.500 L419.500,112.500" stroke="#7c7c7c" stroke-width="1.600"/><circle cx="404.800" cy="129.500" r="1.600" fill="#e8e8e8" stroke="#7c7c7c"/><circle cx="420.300" cy="111.800" r="1.600" fill="#e8e8e8" stroke="#7c7c7c"/><rect x="436.5" y="104.0" width="1.5" height="1.5" fill="#c2c2c2"/><rect x="439.0" y="106.0" width="1.5" height="1.5" fill="#c2c2c2"/><rect x="436.5" y="108.0" width="1.5" height="1.5" fill="#c2c2c2"/><rect x="439.0" y="110.0" width="1.5" height="1.5" fill="#c2c2c2"/><rect x="436.5" y="112.0" width="1.5" height="1.5" fill="#c2c2c2"/><rect x="439.0" y="114.0" width="1.5" height="1.5" fill="#c2c2c2"/><rect x="436.5" y="116.0" width="1.5" height="1.5" fill="#c2c2c2"/><rect x="439.0" y="118.0" width="1.5" height="1.5" fill="#c2c2c2"/><rect x="436.5" y="120.0" width="1.5" height="1.5" fill="#c2c2c2"/><rect x="439.0" y="122.0" width="1.5" height="1.5" fill="#c2c2c2"/><rect x="436.5" y="124.0" width="1.5" height="1.5" fill="#c2c2c2"/><rect x="439.0" y="126.0" width="1.5" height="1.5" fill="#c2c2c2"/><rect x="436.5" y="128.0" width="1.5" height="1.5" fill="#c2c2c2"/><rect x="439.0" y="130.0" width="1.5" height="1.5" fill="#c2c2c2"/><rect x="436.5" y="132.0" width="1.5" height="1.5" fill="#c2c2c2"/><rect x="439.0" y="134.0" width="1.5" height="1.5" fill="#c2c2c2"/><rect x="436.5" y="136.0" width="1.5" height="1.5" fill="#c2c2c2"/><rect x="439.0" y="138.0" width="1.5" height="1.5" fill="#c2c2c2"/><rect x="443.0" y="105.5" width="31.0" height="31.5" fill="#f3e4b2"/><g transform="translate(460.0,121.0) rotate(-32)"><clipPath id="lc460"><path d="M-14.3,0 Q0,-12.5 14.3,0 Q0,12.5 -14.3,0z"/></clipPath><g clip-path="url(#lc460)"><path d="M-14.3,8.4 L-19.3,-8.4" stroke="#d8283a" stroke-width="2.1"/><path d="M-11.6,8.4 L-16.6,-8.4" stroke="#d8283a" stroke-width="2.1"/><path d="M-8.9,8.4 L-13.9,-8.4" stroke="#d8283a" stroke-width="2.1"/><path d="M-6.2,8.4 L-11.2,-8.4" stroke="#d8283a" stroke-width="2.1"/><path d="M-3.5,8.4 L-8.5,-8.4" stroke="#d8283a" stroke-width="2.1"/><path d="M-0.8,8.4 L-5.8,-8.4" stroke="#d8283a" stroke-width="2.1"/><path d="M1.9,8.4 L-3.1,-8.4" stroke="#d8283a" stroke-width="2.1"/><path d="M4.6,8.4 L-0.4,-8.4" stroke="#d8283a" stroke-width="2.1"/><path d="M7.3,8.4 L2.3,-8.4" stroke="#d8283a" stroke-width="2.1"/><path d="M10.0,8.4 L5.0,-8.4" stroke="#d8283a" stroke-width="2.1"/><path d="M12.7,8.4 L7.7,-8.4" stroke="#d8283a" stroke-width="2.1"/><path d="M15.4,8.4 L10.4,-8.4" stroke="#d8283a" stroke-width="2.1"/><path d="M18.1,8.4 L13.1,-8.4" stroke="#d8283a" stroke-width="2.1"/></g></g><rect x="478.0" y="103" width="1.3" height="39" fill="#7e7e7e"/><rect x="481.0" y="105.5" width="31.0" height="31.5" fill="#f3e4b2"/><g transform="translate(498.0,121.5) rotate(-32)"><clipPath id="lc498"><path d="M-13.7,0 Q0,-12.1 13.7,0 Q0,12.1 -13.7,0z"/></clipPath><g clip-path="url(#lc498)"><path d="M-13.7,8.0 L-18.7,-8.0" stroke="#e8836c" stroke-width="1.8"/><path d="M-11.0,8.0 L-16.0,-8.0" stroke="#e8836c" stroke-width="1.8"/><path d="M-8.3,8.0 L-13.3,-8.0" stroke="#e8836c" stroke-width="1.8"/><path d="M-5.6,8.0 L-10.6,-8.0" stroke="#e8836c" stroke-width="1.8"/><path d="M-2.9,8.0 L-7.9,-8.0" stroke="#e8836c" stroke-width="1.8"/><path d="M-0.2,8.0 L-5.2,-8.0" stroke="#e8836c" stroke-width="1.8"/><path d="M2.5,8.0 L-2.5,-8.0" stroke="#e8836c" stroke-width="1.8"/><path d="M5.2,8.0 L0.2,-8.0" stroke="#e8836c" stroke-width="1.8"/><path d="M7.9,8.0 L2.9,-8.0" stroke="#e8836c" stroke-width="1.8"/><path d="M10.6,8.0 L5.6,-8.0" stroke="#e8836c" stroke-width="1.8"/><path d="M13.3,8.0 L8.3,-8.0" stroke="#e8836c" stroke-width="1.8"/><path d="M16.0,8.0 L11.0,-8.0" stroke="#e8836c" stroke-width="1.8"/><path d="M18.7,8.0 L13.7,-8.0" stroke="#e8836c" stroke-width="1.8"/></g></g><g transform="translate(530.0,121.5) rotate(-32)"><clipPath id="lc530"><path d="M-14.0,0 Q0,-12.3 14.0,0 Q0,12.3 -14.0,0z"/></clipPath><path d="M-14.0,0 Q0,-12.3 14.0,0 Q0,12.3 -14.0,0z" fill="none" stroke="#9c9c9c" stroke-width="1.100"/></g><rect x="546.0" y="105.5" width="31.0" height="31.5" fill="#f3e4b2"/><g transform="translate(562.0,122.0) rotate(-32)"><clipPath id="lc562"><path d="M-12.0,0 Q0,-10.6 12.0,0 Q0,10.6 -12.0,0z"/></clipPath><g clip-path="url(#lc562)"><path d="M-12.0,7.1 L-17.0,-7.1" stroke="#e8836c" stroke-width="1.7"/><path d="M-9.3,7.1 L-14.3,-7.1" stroke="#e8836c" stroke-width="1.7"/><path d="M-6.6,7.1 L-11.6,-7.1" stroke="#e8836c" stroke-width="1.7"/><path d="M-3.9,7.1 L-8.9,-7.1" stroke="#e8836c" stroke-width="1.7"/><path d="M-1.2,7.1 L-6.2,-7.1" stroke="#e8836c" stroke-width="1.7"/><path d="M1.5,7.1 L-3.5,-7.1" stroke="#e8836c" stroke-width="1.7"/><path d="M4.2,7.1 L-0.8,-7.1" stroke="#e8836c" stroke-width="1.7"/><path d="M6.9,7.1 L1.9,-7.1" stroke="#e8836c" stroke-width="1.7"/><path d="M9.6,7.1 L4.6,-7.1" stroke="#e8836c" stroke-width="1.7"/><path d="M12.3,7.1 L7.3,-7.1" stroke="#e8836c" stroke-width="1.7"/><path d="M15.0,7.1 L10.0,-7.1" stroke="#e8836c" stroke-width="1.7"/><path d="M17.7,7.1 L12.7,-7.1" stroke="#e8836c" stroke-width="1.7"/></g></g><path d="M586,114 L602,130" stroke="#8a8a8a" stroke-width="1.300" stroke-dasharray="1.600 2"/><path d="M582,116 h5.500 l-2.700,-5z M599.500,133 h5.500 l-2.700,-5z" fill="#1a1a1a"/><path d="M633.500,108.500 V128.500 H616" fill="none" stroke="#e27a94" stroke-width="1.600"/><path d="M625.500,108 V134 M621,115 V124.500 H630 V108.500" fill="none" stroke="#1e1e1e" stroke-width="1.700"/><path d="M645.500,115 q8,-6.500 17,-0.500 l7,-4 q-2,4.500 0,9.500 l-7,-4 q-9,5.500 -17,-1z" fill="#ece26a" stroke="#a8a060" stroke-width=".9"/><circle cx="650" cy="114.0" r=".9" fill="#544"/><path d="M645.500,128 q8,-6.500 17,-0.500 l7,-4 q-2,4.500 0,9.500 l-7,-4 q-9,5.500 -17,-1z" fill="#ece26a" stroke="#a8a060" stroke-width=".9"/><circle cx="650" cy="127.0" r=".9" fill="#544"/><rect x="676.0" y="103" width="1.3" height="39" fill="#7e7e7e"/><rect x="680.0" y="105.5" width="63.0" height="31.5" fill="#f3e4b2"/><rect x="684" y="109.500" width="23.500" height="22.500" fill="#2b86d6" stroke="#7a7a78" stroke-width="1.800"/><path d="M685,131 v-7 q6,-3 11,-1 t11,-3 v11z" fill="#2cae48"/><path d="M694,131 q6,-5 13,-4 v4z" fill="#8a5a2c"/><path d="M687,124 l3.500,-10 l3.500,10z" fill="#35b85a"/><circle cx="700" cy="115.500" r="2.200" fill="#f0e45a"/><rect x="721" y="109.500" width="11.500" height="11.500" fill="#2ca84a"/><circle cx="722.500" cy="125" r="7.700" fill="#d32632"/><path d="M733.500,116.500 l7.500,15 h-15z" fill="#2aa6dc"/><path d="M759,108.500 q3,1 3,8 q5,-3 9,-1 q1,4 -6,7 q4,5 2,9 q-4,1 -7.500,-5 q-3,6 -7,5 q-2,-4 2,-9 q-7,-2 -6.500,-6.500 q4,-2.500 9,.5 q0,-7 3,-8z" fill="#ead9aa" stroke="#d6c48e" stroke-width=".8"/><rect x="778.0" y="103" width="1.3" height="39" fill="#7e7e7e"/><rect x="782.0" y="105.5" width="31.0" height="31.5" fill="#f3e4b2"/><path d="M785.500,123 q0,-13 12.500,-13 q12.500,0 12.500,12 q0,8 -6,10.500 q-4,-1 -3,-6 q0,-4 -3.500,-4 q-3.500,0 -3.500,4 q1,6 -3,7 q-6,-3 -6,-10.500z" fill="#e9788a" stroke="#b85060" stroke-width="1"/><path d="M790,118 q3,-5 8,-4" stroke="#f8c0c8" stroke-width="2" fill="none"/><path d="M817,116 l8,-5.500 q5,3 10,0 l8,5.500 l-3.500,6 l-3.500,-2 v13 h-12 v-13 l-3.500,2z" fill="#18a24c" stroke="#0f7a38" stroke-width=".8"/><rect x="847.0" y="105.5" width="32.0" height="31.5" fill="#f3e4b2"/><circle cx="862" cy="113.500" r="5.800" fill="#d23444"/><circle cx="855" cy="126.500" r="5.800" fill="#4a50b4"/><circle cx="868.500" cy="126.500" r="5.800" fill="#2eb24e"/><path d="M860,111 q2,-2 4,0 M853,124 q2,-2 4,0 M866.500,124 q2,-2 4,0" stroke="#fff" stroke-opacity=".7" stroke-width="1.500" fill="none"/><rect x="880.5" y="103" width="1.3" height="39" fill="#7e7e7e"/><rect x="890" y="112" width="20" height="19" rx="6.500" fill="#dedede" stroke="#2ea866" stroke-width="2"/><rect x="887" y="116" width="3.200" height="11" fill="#2ea866"/><rect x="909.800" y="116" width="3.200" height="11" fill="#2ea866"/><rect x="919.500" y="108.500" width="24.500" height="25" fill="#d2d2dc" stroke="#8886b0" stroke-width="1.200"/><path d="M927.700,108.500 v25 M935.800,108.500 v25 M919.500,116.800 h24.500 M919.500,125.200 h24.500" stroke="#7472a0" stroke-width="1.300"/><rect x="951.500" y="108.500" width="25" height="25" fill="#e0e4ea" stroke="#8a98ac" stroke-width="1.200"/><rect x="952" y="109" width="24" height="4" fill="#8cc0e6"/><rect x="952" y="113" width="7" height="20" fill="#b8c0cc"/><path d="M959,109 v24.500 M968,113 v20.500 M952,119.500 h24.500 M952,126.500 h24.500" stroke="#8a94a8" stroke-width="1"/><path d="M961,116 h14" stroke="#556" stroke-width="1.200" stroke-dasharray="1.500 2"/><rect x="982.0" y="103" width="1.3" height="39" fill="#6e6e6e"/><rect x="986" y="109.500" width="61" height="24" fill="#f1f1f1" stroke="#bdbdbd" stroke-width="1.300"/><text x="989.500" y="127" font-size="14.500" fill="#333" textLength="36" lengthAdjust="spacingAndGlyphs">Metric</text><path d="M1035.7,120.3 h6.6 l-3.3,3.3 z" fill="#666"/><rect x="1054" y="112" width="20" height="19" rx="6.500" fill="#e4e4e4" stroke="#2ea866" stroke-width="2"/><rect x="1051" y="116" width="3.200" height="11" fill="#2ea866"/><rect x="1073.800" y="116" width="3.200" height="11" fill="#2ea866"/><path d="M1058.500,127.500 L1065.500,118.500" stroke="#1c1c1c" stroke-width="3.200"/><path d="M1056,130.500 l1.200,-3.800 l2.600,2.100z" fill="#e8a040" stroke="#e8a040" stroke-width=".8"/><path d="M1065.500,118.500 l1.300,-1.700" stroke="#e8a040" stroke-width="3"/><rect x="0.0" y="145.0" width="265.0" height="34.5" fill="#dbdbdb"/><rect x="266.5" y="145.0" width="733.5" height="34.5" fill="#dbdbdb"/><rect x="1001.5" y="145.0" width="78.5" height="34.5" fill="#dbdbdb"/><rect x="265" y="145" width="1.200" height="34" fill="#b4b4b4"/><rect x="1000" y="145" width="1.200" height="34" fill="#b4b4b4"/><path d="M-2,161 l3.500,4.500 l4,-5.500 l4,5.500 l4,-5.500 l4,5.500 l4,-5.500 l2.500,4" fill="none" stroke="#d6323a" stroke-width="1.700" stroke-linejoin="round"/><path d="M30.500,166 V160 H55 V166 M38.500,160 V165 M46.500,160 V165" fill="none" stroke="#d6323a" stroke-width="1.700"/><rect x="61.0" y="148" width="1.3" height="30" fill="#8e8e8e"/><path d="M69,156 V165 q0,3 3,3 q3,0 3,-3 V159 q0,-3 3,-3 q3,0 3,3 V168 M81,168 h4.500 V159 q0,-3 3,-3 q2.500,0 3,3 V168" fill="none" stroke="#d6323a" stroke-width="1.700"/><path d="M101,156 V169" stroke="#d6323a" stroke-width="1.700" stroke-dasharray="5 2 3 1"/><path d="M105,156 V169" stroke="#e88" stroke-width="1.700" stroke-dasharray="2 2 6 2"/><path d="M109,156 V169" stroke="#d6323a" stroke-width="1.700" stroke-dasharray="4 1.500 2 1.500"/><path d="M113,156 V169" stroke="#e88" stroke-width="1.700" stroke-dasharray="5 2 3 1"/><path d="M117,156 V169" stroke="#d6323a" stroke-width="1.700" stroke-dasharray="2 2 6 2"/><path d="M121,156 V169" stroke="#e88" stroke-width="1.700" stroke-dasharray="4 1.500 2 1.500"/><path d="M125,156 V169" stroke="#d6323a" stroke-width="1.700" stroke-dasharray="5 2 3 1"/><path d="M132.500,159.500 V165.500 H139 V160 H145 V165.500 H151.500 V160 H157 V166" fill="none" stroke="#d6323a" stroke-width="1.700"/><rect x="164" y="156.500" width="25" height="12.500" rx="6" fill="#f6c8c0" stroke="#d6323a" stroke-width="1.600"/><ellipse cx="170.0" cy="162.700" rx="3" ry="6" fill="none" stroke="#d6323a" stroke-width="1.300"/><ellipse cx="174.5" cy="162.700" rx="3" ry="6" fill="none" stroke="#d6323a" stroke-width="1.300"/><ellipse cx="179.0" cy="162.700" rx="3" ry="6" fill="none" stroke="#d6323a" stroke-width="1.300"/><ellipse cx="183.5" cy="162.700" rx="3" ry="6" fill="none" stroke="#d6323a" stroke-width="1.300"/><rect x="196" y="156" width="26" height="13" rx="1" fill="#e0514a"/><path d="M197,160.300 h24 M197,164.700 h24" stroke="#f4b0a8" stroke-width="1"/><rect x="227.0" y="148" width="1.3" height="30" fill="#8e8e8e"/><path d="M255.300,156.200 A10.600,12.300 0 1 0 255,169.300 A6.200,7 0 1 1 255.300,156.200 z" fill="#dcdce2" stroke="#7270c0" stroke-width="1.300" stroke-linejoin="round"/><rect x="268.5" y="149.0" width="1.5" height="1.5" fill="#c2c2c2"/><rect x="271.0" y="151.0" width="1.5" height="1.5" fill="#c2c2c2"/><rect x="268.5" y="153.0" width="1.5" height="1.5" fill="#c2c2c2"/><rect x="271.0" y="155.0" width="1.5" height="1.5" fill="#c2c2c2"/><rect x="268.5" y="157.0" width="1.5" height="1.5" fill="#c2c2c2"/><rect x="271.0" y="159.0" width="1.5" height="1.5" fill="#c2c2c2"/><rect x="268.5" y="161.0" width="1.5" height="1.5" fill="#c2c2c2"/><rect x="271.0" y="163.0" width="1.5" height="1.5" fill="#c2c2c2"/><rect x="268.5" y="165.0" width="1.5" height="1.5" fill="#c2c2c2"/><rect x="271.0" y="167.0" width="1.5" height="1.5" fill="#c2c2c2"/><rect x="268.5" y="169.0" width="1.5" height="1.5" fill="#c2c2c2"/><rect x="271.0" y="171.0" width="1.5" height="1.5" fill="#c2c2c2"/><rect x="268.5" y="173.0" width="1.5" height="1.5" fill="#c2c2c2"/><rect x="271.0" y="175.0" width="1.5" height="1.5" fill="#c2c2c2"/><text x="280.500" y="167" font-size="12.500" font-weight="bold" fill="#1e1e28" textLength="23" lengthAdjust="spacingAndGlyphs">Fills:</text><rect x="308.0" y="147.0" width="32.0" height="30.5" fill="#f3e4b2"/><path d="M311.500,153 l3,18.500 l4.500,-18.500 l3,18.500 l4.500,-18.500 l3,18.500 l4.500,-18.500 l2.500,18.500" fill="none" stroke="#d6323a" stroke-width="1.700" stroke-linejoin="miter"/><path d="M344.500,154 l3,17 l4,-17 l3,17 l4,-17 l3,17 l4,-17 l2,17" fill="none" stroke="#b4303a" stroke-width="3.200" stroke-linejoin="miter"/><path d="M376.500,171.500 l4.500,-18.500 l4,18.500 l4.500,-18.500 l4,18.500 l4.500,-18.500 l3.500,18.500" fill="none" stroke="#d6323a" stroke-width="1.700" stroke-linejoin="miter"/><path d="M408,172 V153 H432.500 V172 M416,153 V171 M424.500,153 V171" fill="none" stroke="#d6323a" stroke-width="1.700"/><rect x="438.0" y="148" width="1.3" height="30" fill="#8e8e8e"/><path d="M446,153 V168 q0,3.500 3.500,3.500 q3.500,0 3.500,-3.500 V156 q0,-3 3,-3 q3,0 3,3 V171.500 H463.500 V156 q0,-3 3,-3 q3,0 3,3 V168 q0,3 2.500,4" fill="none" stroke="#d6323a" stroke-width="1.700"/><ellipse cx="483.0" cy="162" rx="5" ry="9.500" fill="none" stroke="#a9a9a9" stroke-width="1.400"/><ellipse cx="487.0" cy="162" rx="5" ry="9.500" fill="none" stroke="#a9a9a9" stroke-width="1.400"/><ellipse cx="491.0" cy="162" rx="5" ry="9.500" fill="none" stroke="#a9a9a9" stroke-width="1.400"/><ellipse cx="495.0" cy="162" rx="5" ry="9.500" fill="none" stroke="#a9a9a9" stroke-width="1.400"/><ellipse cx="498.0" cy="162" rx="5" ry="9.500" fill="none" stroke="#a9a9a9" stroke-width="1.400"/><path d="M510,153 V171.500 H516 V153.500 H522.500 V171.500 H528.500 V153.500 H534.500 V172" fill="none" stroke="#d6323a" stroke-width="1.700"/><rect x="543" y="151" width="23" height="23.500" fill="#e4c4c0" stroke="#d6323a" stroke-width="1.700"/><path d="M549,150 v25 M555,150 v25 M561,150 v25 M542,157 h25 M542,163 h25 M542,169 h25" stroke="#d6323a" stroke-width="2.200"/><path d="M546,154 h17 v17.500 h-17z" fill="none" stroke="#f0c8c4" stroke-width="1"/><ellipse cx="585.500" cy="156.0" rx="12" ry="4.300" fill="#e2d8d6" stroke="#d6323a" stroke-width="1.500"/><ellipse cx="581" cy="156.0" rx="6" ry="3" fill="none" stroke="#d6323a" stroke-width="1.200"/><ellipse cx="590" cy="156.0" rx="6" ry="3" fill="none" stroke="#d6323a" stroke-width="1.200"/><ellipse cx="585.500" cy="168.5" rx="12" ry="4.300" fill="#e2d8d6" stroke="#d6323a" stroke-width="1.500"/><ellipse cx="581" cy="168.5" rx="6" ry="3" fill="none" stroke="#d6323a" stroke-width="1.200"/><ellipse cx="590" cy="168.5" rx="6" ry="3" fill="none" stroke="#d6323a" stroke-width="1.200"/><polygon points="630.3,162.5 628.4,165.3 628.7,168.7 625.6,170.1 624.1,173.2 620.8,172.9 618.0,174.8 615.2,172.9 611.9,173.2 610.4,170.1 607.3,168.7 607.6,165.3 605.7,162.5 607.6,159.7 607.3,156.3 610.4,154.9 611.9,151.8 615.2,152.1 618.0,150.2 620.8,152.1 624.1,151.8 625.6,154.9 628.7,156.3 628.4,159.7" fill="#e8564e" stroke="#d6323a" stroke-width="1"/><circle cx="618" cy="162.500" r="6.500" fill="#dbdbdb" stroke="#d6323a" stroke-width="1"/><path d="M638,150.500 V175" stroke="#e8405c" stroke-width="1.800" stroke-dasharray="8 3 14"/><path d="M642,150.500 V175" stroke="#f4a0b0" stroke-width="1.800" stroke-dasharray="3 4 10 2 6"/><path d="M646,150.500 V175" stroke="#d83048" stroke-width="1.800" stroke-dasharray="12 2 4 2 5"/><path d="M650,150.500 V175" stroke="#e8405c" stroke-width="1.800" stroke-dasharray="2 6 17"/><path d="M654,150.500 V175" stroke="#f4a0b0" stroke-width="1.800" stroke-dasharray="6 3 8 3 5"/><path d="M658,150.500 V175" stroke="#d83048" stroke-width="1.800" stroke-dasharray="10 4 11"/><path d="M662,150.500 V175" stroke="#e8405c" stroke-width="1.800" stroke-dasharray="7 2 3 2 11"/><path d="M674.0,150.8 l3.700,3.700 l-3.700,3.700 l-3.700,-3.700z" fill="#d81e38"/><path d="M674.0,159.1 l3.700,3.700 l-3.700,3.700 l-3.700,-3.700z" fill="#d81e38"/><path d="M674.0,167.4 l3.700,3.700 l-3.700,3.700 l-3.700,-3.700z" fill="#d81e38"/><path d="M682.3,150.8 l3.700,3.700 l-3.700,3.700 l-3.700,-3.700z" fill="#d81e38"/><path d="M682.3,159.1 l3.700,3.700 l-3.700,3.700 l-3.700,-3.700z" fill="#d81e38"/><path d="M682.3,167.4 l3.700,3.700 l-3.700,3.700 l-3.700,-3.700z" fill="#d81e38"/><path d="M690.6,150.8 l3.700,3.700 l-3.700,3.700 l-3.700,-3.700z" fill="#d81e38"/><path d="M690.6,159.1 l3.700,3.700 l-3.700,3.700 l-3.700,-3.700z" fill="#d81e38"/><path d="M690.6,167.4 l3.700,3.700 l-3.700,3.700 l-3.700,-3.700z" fill="#d81e38"/><path d="M706,155.500 l3.500,6.500 l-3.500,6.500 l-3.500,-6.500z M714,152 l4,10 l-4,10 l-4,-10z M722.500,155.500 l3.500,6.500 l-3.500,6.500 l-3.500,-6.500z" fill="#9e9e9e"/><path d="M734,151 l10.500,12 l-10.500,12 M745,151 l-10.500,12 l10.500,12 M747,151 l10.500,12 l-10.500,12 M758,151 l-10.500,12 l10.500,12" fill="none" stroke="#d8403c" stroke-width="1.600"/><rect x="764.0" y="148" width="1.3" height="30" fill="#8e8e8e"/><path d="M772,158.0 q12.500,-12 25,0 l-0.500,3.500 q-12,-11 -24,0z" fill="#f6c0c8" stroke="#d63a58" stroke-width="1.200"/><path d="M772,164.5 q12.500,-12 25,0 l-0.500,3.500 q-12,-11 -24,0z" fill="#f6c0c8" stroke="#d63a58" stroke-width="1.200"/><path d="M772,171.0 q12.500,-12 25,0 l-0.500,3.500 q-12,-11 -24,0z" fill="#f6c0c8" stroke="#d63a58" stroke-width="1.200"/><circle cx="815.500" cy="162.500" r="12.300" fill="#f4a8a0"/><polyline points="816.3,162.5 816.4,162.6 816.4,162.8 816.4,163.0 816.4,163.2 816.3,163.4 816.2,163.6 816.0,163.7 815.9,163.9 815.6,164.0 815.4,164.1 815.1,164.1 814.8,164.1 814.5,164.0 814.2,163.9 814.0,163.7 813.7,163.5 813.5,163.2 813.3,162.9 813.2,162.5 813.2,162.1 813.2,161.7 813.3,161.3 813.4,160.9 813.7,160.5 814.0,160.2 814.3,159.9 814.8,159.7 815.2,159.5 815.7,159.4 816.2,159.4 816.8,159.5 817.3,159.7 817.8,160.0 818.2,160.3 818.6,160.8 818.9,161.3 819.1,161.8 819.3,162.5 819.3,163.1 819.2,163.7 819.0,164.4 818.8,165.0 818.4,165.5 817.9,166.0 817.3,166.4 816.6,166.7 815.9,166.9 815.2,167.0 814.4,167.0 813.7,166.8 813.0,166.5 812.3,166.1 811.7,165.6 811.1,165.0 810.7,164.2 810.4,163.4 810.3,162.6 810.2,161.7 810.4,160.9 810.6,160.0 811.0,159.2 811.6,158.4 812.3,157.8 813.1,157.2 813.9,156.8 814.9,156.6 815.9,156.5 816.9,156.5 817.8,156.8 818.8,157.2 819.7,157.7 820.5,158.4 821.1,159.3 821.7,160.2 822.0,161.2 822.2,162.3 822.2,163.4 822.1,164.6 821.7,165.6 821.2,166.7 820.5,167.6 819.6,168.4 818.6,169.1 817.5,169.6 816.3,169.9 815.1,170.0 813.9,169.9 812.6,169.6 811.5,169.1 810.4,168.4 809.4,167.5 808.6,166.5 808.0,165.4 807.5,164.1 807.3,162.8 807.3,161.4 807.5,160.1 807.9,158.7 808.6,157.5 809.5,156.4 810.5,155.4 811.7,154.6 813.0,154.0 814.4,153.7 815.9,153.5 817.4,153.6 818.9,154.0 820.3,154.6 821.5,155.4 822.7,156.5 823.6,157.7 824.4,159.1 824.9,160.5 825.2,162.1 825.2,163.7 824.9,165.3 824.4,166.9 823.6,168.3 822.6,169.6 821.4,170.8 820.0,171.7 818.5,172.4 816.8,172.8 815.1,173.0 813.4,172.8 811.7,172.4 810.0,171.7 808.6,170.8 807.2,169.5 806.1,168.1 805.3,166.5 804.7,164.8 804.3,163.0 804.3,161.2 804.6,159.3 805.2,157.5 806.1,155.9 807.3,154.4 808.7,153.1 810.3,152.0 812.0,151.2 813.9,150.7 815.9,150.6 817.9,150.7 819.8,151.2 821.6,152.0 823.3,153.1 824.8,154.4 826.1,156.0" fill="none" stroke="#d8405a" stroke-width="1.300"/><path d="M836,152 q11.500,4 23.500,0 q-3.500,11 0,22 q-12,-4 -23.500,0 q3.500,-11 0,-22z" fill="#f2a090" stroke="#d84a4a" stroke-width="1.300"/><path d="M840,156 q8,2.500 15.500,0 q-2,7 0,14 q-8,-2.500 -15.500,0 q2,-7 0,-14z M843.500,159.500 h8.500 v7 h-8.500z" fill="none" stroke="#d84a4a" stroke-width="1.100"/><rect x="846" y="161.500" width="3" height="3" fill="#7a8a58"/><path d="M868,153 q3,-3 6,0 q3,3 1,7 q-2,4 1,6 q3,1 3,-3 q0,-5 -2,-8 q3,-4 7,-2 q3,-3 6,0 q4,4 1,9 q3,5 1,11 q-4,2 -6,-2 q-2,-4 -4,0 q-3,4 -7,1 q-3,2 -6,0 q-3,-3 0,-8 q-3,-5 -1,-11z" fill="#e4dcde" stroke="#e05a7a" stroke-width="1.4" stroke-linejoin="round"/><path d="M872,158 q2,5 0,10 M880,157 q3,6 1,12 M888,156 q-2,6 1,12" fill="none" stroke="#e05a7a" stroke-width="1.1"/><path d="M900,153 q3,-3 6,0 q3,3 1,7 q-2,4 1,6 q3,1 3,-3 q0,-5 -2,-8 q3,-4 7,-2 q3,-3 6,0 q4,4 1,9 q3,5 1,11 q-4,2 -6,-2 q-2,-4 -4,0 q-3,4 -7,1 q-3,2 -6,0 q-3,-3 0,-8 q-3,-5 -1,-11z" fill="#e6c6ce" stroke="#d83058" stroke-width="2.5" stroke-linejoin="round"/><path d="M904,158 q2,5 0,10 M912,157 q3,6 1,12 M920,156 q-2,6 1,12" fill="none" stroke="#d83058" stroke-width="2.0"/><path d="M932,153 q3,-3 6,0 q3,3 1,7 q-2,4 1,6 q3,1 3,-3 q0,-5 -2,-8 q3,-4 7,-2 q3,-3 6,0 q4,4 1,9 q3,5 1,11 q-4,2 -6,-2 q-2,-4 -4,0 q-3,4 -7,1 q-3,2 -6,0 q-3,-3 0,-8 q-3,-5 -1,-11z" fill="#e2d6d9" stroke="#dc4468" stroke-width="1.7" stroke-linejoin="round"/><path d="M936,158 q2,5 0,10 M944,157 q3,6 1,12 M952,156 q-2,6 1,12" fill="none" stroke="#dc4468" stroke-width="1.4"/><rect x="962.5" y="148" width="1.3" height="30" fill="#8e8e8e"/><path d="M991.800,157 A11.800,12.400 0 1 0 991.300,169.300 A6,6.500 0 1 1 991.800,157 z" fill="#41389e" stroke="#41389e" stroke-width=".8" stroke-linejoin="round"/><rect x="1003.5" y="149.0" width="1.5" height="1.5" fill="#c2c2c2"/><rect x="1006.0" y="151.0" width="1.5" height="1.5" fill="#c2c2c2"/><rect x="1003.5" y="153.0" width="1.5" height="1.5" fill="#c2c2c2"/><rect x="1006.0" y="155.0" width="1.5" height="1.5" fill="#c2c2c2"/><rect x="1003.5" y="157.0" width="1.5" height="1.5" fill="#c2c2c2"/><rect x="1006.0" y="159.0" width="1.5" height="1.5" fill="#c2c2c2"/><rect x="1003.5" y="161.0" width="1.5" height="1.5" fill="#c2c2c2"/><rect x="1006.0" y="163.0" width="1.5" height="1.5" fill="#c2c2c2"/><rect x="1003.5" y="165.0" width="1.5" height="1.5" fill="#c2c2c2"/><rect x="1006.0" y="167.0" width="1.5" height="1.5" fill="#c2c2c2"/><rect x="1003.5" y="169.0" width="1.5" height="1.5" fill="#c2c2c2"/><rect x="1006.0" y="171.0" width="1.5" height="1.5" fill="#c2c2c2"/><rect x="1003.5" y="173.0" width="1.5" height="1.5" fill="#c2c2c2"/><rect x="1006.0" y="175.0" width="1.5" height="1.5" fill="#c2c2c2"/><rect x="1010.5" y="146.3" width="69.5" height="32.2" fill="#f3e4b2"/><path d="M1014,153 h24.500 v21.500 h-24.500z M1026,153 v21.500 M1014,164 h24.500 M1014,174 l12,-20 M1026,174.500 l12,-21" fill="none" stroke="#d4303c" stroke-width="1.600"/><path d="M1047.500,153 v21" stroke="#55509c" stroke-width="1" stroke-dasharray="1.500 2.500"/><path d="M1046.500,152.500 h3.500 M1046.500,174.500 h3.500" stroke="#6a66b0" stroke-width="1.200"/><path d="M1052.500,155.500 h19.500 M1052.500,171.500 h19.500" stroke="#5a50b0" stroke-width="1.800"/><path d="M1053.500,174 v-21.500 l3.600,21.500 v-21.500 l3.600,21.500 v-21.500 l3.600,21.500 v-21.500 l3.600,21.500 v-21.500 l3.100,21.500 v-21.500" fill="none" stroke="#d4303c" stroke-width="1.700" stroke-linejoin="bevel"/><rect x="1077.500" y="157" width="2" height="12" fill="#86cdb0"/><path d="M879,1048 l4.500,-5.500 l4.500,5.500z" fill="#c4c4c4"/><path d="M879,1059 l4.500,5.500 l4.500,-5.500z" fill="#b4b4b4"/><rect x="903" y="1046" width="7" height="16" fill="#56b8bc"/><rect x="907" y="1044.500" width="2.500" height="2.500" fill="#1414d0"/><rect x="911" y="1045" width="9.500" height="17" fill="#e8b07a"/><path d="M911,1045 l9.500,4" stroke="#5a3a1a" stroke-width="1.300"/><path d="M911,1048 l9.500,4" stroke="#5a3a1a" stroke-width="1.300"/><path d="M911,1051 l9.500,4" stroke="#5a3a1a" stroke-width="1.300"/><path d="M911,1054 l9.500,4" stroke="#5a3a1a" stroke-width="1.300"/><path d="M911,1057 l9.500,4" stroke="#5a3a1a" stroke-width="1.300"/><rect x="922" y="1046" width="7.500" height="16" fill="#dc4a5c"/><rect x="925" y="1044.500" width="2.500" height="2.500" fill="#1414d0"/><rect x="935" y="1046" width="7" height="16" fill="#56b8bc"/><rect x="939" y="1044.500" width="2.500" height="2.500" fill="#1414d0"/><rect x="943" y="1045" width="9.500" height="17" fill="#ecc088"/><path d="M943.500,1046 l8.500,15 M952,1046 l-8.500,15" stroke="#3a2a1a" stroke-width="1.500"/><rect x="954" y="1046" width="7.500" height="16" fill="#dc4a5c"/><rect x="957" y="1044.500" width="2.500" height="2.500" fill="#1414d0"/><rect x="978" y="1044" width="17" height="18" fill="#e6e6e6" stroke="#c8c8c8"/><path d="M973,1041 L998,1065" stroke="#777" stroke-width="1.800"/><circle cx="1024" cy="1053.500" r="9" fill="none" stroke="#bcbcbc" stroke-width="5.500"/><circle cx="1056" cy="1053.500" r="12.300" fill="#e4e4e4" stroke="#6a6a6a" stroke-width="1"/><path d="M1056,1053 L1045.500,1047 A12,12 0 0 1 1066.500,1047z" fill="#46c05a"/><path d="M1056,1053 L1045.500,1047 A12,12 0 0 0 1056,1065.500z" fill="#4cb4b8"/><path d="M1056,1053 L1066.500,1047 A12,12 0 0 1 1056,1065.500z" fill="#dc4450"/><path d="M1056,1053 L1045.500,1047 M1056,1053 L1066.500,1047 M1056,1053 V1065.500" stroke="#f0f0f0" stroke-width="1.300"/></svg>
<div class="a" style="left:78px;top:1036px;width:34px;height:34px;background:#0a0a0a"></div>
<div class="a" style="left:83px;top:1041px;width:24.5px;height:24.5px;background:#fff"></div>
<div class="sw" style="left:84.5px;top:1042.5px;width:21.5px;height:21.5px;line-height:21.5px;background:#22a51e;color:#fff">1</div>
<div class="sw" style="left:116.1px;background:#1212e2;color:#e8e8ff">2</div>
<div class="sw" style="left:152.2px;background:#e20016;color:#ffe0e0">3</div>
<div class="sw" style="left:188.3px;background:#f1ff1e;color:#333">4</div>
<div class="sw" style="left:224.4px;background:#4bd1c3;color:#234">5</div>
<div class="sw" style="left:260.5px;background:#a800c0;color:#f4d8ff">6</div>
<div class="sw" style="left:296.6px;background:#19ff1e;color:#143">7</div>
<div class="sw" style="left:332.7px;background:#111111;color:#ddd">8</div>
<div class="sw" style="left:368.8px;background:#f0f0f0;color:#333">9</div>
<div class="sw" style="left:404.9px;background:#100c9e;color:#dde">10</div>
<div class="sw" style="left:441.0px;background:#8c0014;color:#fdd">11</div>
<div class="sw" style="left:477.1px;background:#ee9a42;color:#432">12</div>
<div class="sw" style="left:513.2px;background:#9400c8;color:#fdf">13</div>
<div class="sw" style="left:549.3px;background:#9a6a3c;color:#fed">14</div>
<div class="sw" style="left:585.4px;background:#f07acc;color:#423">15</div>
<div class="sw" style="left:621.5px;background:#7a1830;color:#fdd">16</div>
<div class="sw" style="left:657.6px;background:#d8d0c0;color:#333">17</div>
<div class="sw" style="left:693.7px;background:#e8962c;color:#422">18</div>
<div class="sw" style="left:729.8px;background:#ecebe0;color:#333">19</div>
<div class="sw" style="left:765.9px;background:#222222;color:#ddd">20</div>
<div class="sw" style="left:802.0px;background:#e8e464;color:#333">21</div>
<div class="sw" style="left:838.1px;background:#54704e;color:#eee">22</div>
<div class="a" style="left:860px;top:1038px;width:9px;height:8px;background:#1010e0"></div>
<div class="a" style="left:10px;top:1050px;width:24px;height:6px;background:#444"></div>
<div class="a" style="left:19px;top:1041px;width:6px;height:24px;background:#444"></div>
<div class="a" style="left:41px;top:1050px;width:25px;height:6px;background:#8a8a8a;border-radius:2px"></div>
<div class="a sep" style="left:2px;top:1037px;height:33px;background:#9a9a9a"></div>
<div class="a sep" style="left:72px;top:1037px;height:33px;background:#9a9a9a"></div>
<div class="a sep" style="left:895px;top:1037px;height:33px;background:#9a9a9a"></div>
<div class="a sep" style="left:967px;top:1037px;height:33px;background:#9a9a9a"></div>
<div class="a sep" style="left:1004px;top:1037px;height:33px;background:#9a9a9a"></div>
<div class="a sep" style="left:1074px;top:1037px;height:33px;background:#9a9a9a"></div>
</body></html>
